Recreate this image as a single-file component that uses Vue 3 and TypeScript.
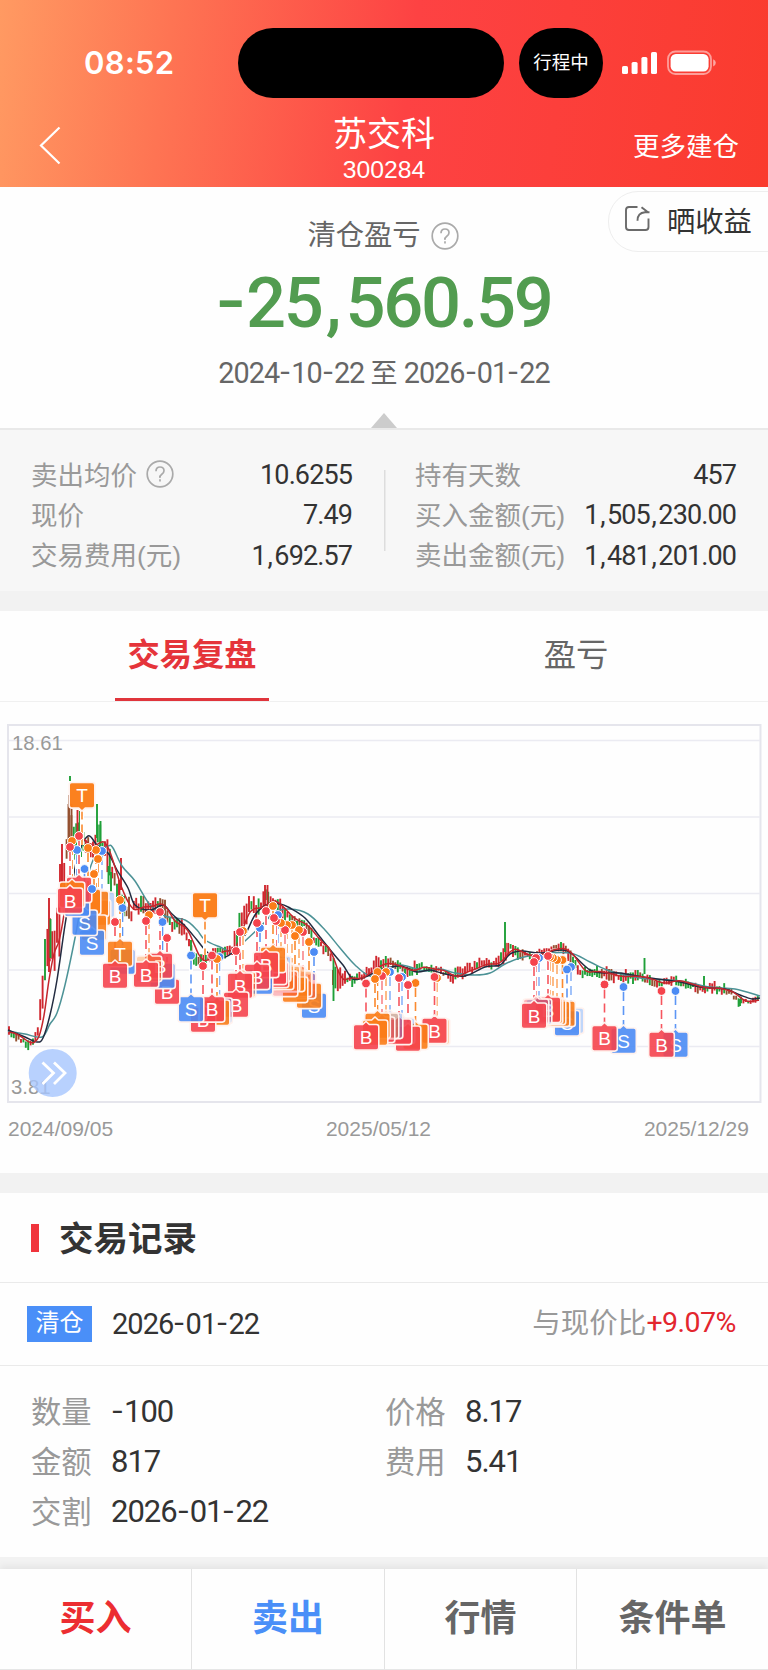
<script setup lang="ts">
import { defineComponent, h } from 'vue'

type Kind = 'B' | 'S' | 'T'
interface Marker { x: number; y: number; k: Kind; ghost?: boolean; up?: boolean; bare?: boolean }
interface Candle { x: number; top: number; bottom: number; color: string }
type Point = [number, number]

// Figures with widened hyphens and commas
const Num = defineComponent({
  props: { v: { type: String, required: true } },
  setup(props) {
    return () =>
      h('span', { class: 'num' }, props.v.split(/([-,])/).filter(Boolean).map((part) =>
        part === '-' ? h('span', { class: 'num-dash' }, part) : part === ',' ? h('span', { class: 'num-comma' }, part) : part,
      ))
  },
})

const stats = [
  [
    { label: '卖出均价', value: '10.6255', help: true },
    { label: '现价', value: '7.49', help: false },
    { label: '交易费用(元)', value: '1,692.57', help: false },
  ],
  [
    { label: '持有天数', value: '457', help: false },
    { label: '买入金额(元)', value: '1,505,230.00', help: false },
    { label: '卖出金额(元)', value: '1,481,201.00', help: false },
  ],
]

const details = [
  { label: '数量', value: '-100' },
  { label: '价格', value: '8.17' },
  { label: '金额', value: '817' },
  { label: '费用', value: '5.41' },
  { label: '交割', value: '2026-01-22' },
]

const gridLines = [740.5, 817, 893.5, 970, 1046.5]

// x, y, half range of the price at that point
const trend: [number, number, number][] = [
  [9, 1032, 4], [20, 1039, 5], [28, 1045, 5], [34, 1040, 5], [38, 1030, 7], [42, 1002, 16], [46, 955, 38],
  [50, 944, 32], [54, 950, 26], [58, 935, 36], [62, 885, 24], [66, 860, 24], [69, 835, 30], [72, 832, 27],
  [76, 836, 24], [80, 840, 20], [86, 846, 14], [92, 850, 12], [97, 835, 25], [102, 845, 16], [107, 853, 16],
  [112, 876, 12], [118, 890, 14], [124, 905, 10], [131, 913, 11], [138, 905, 9], [146, 908, 8], [153, 904, 10],
  [160, 902, 10], [167, 918, 9], [173, 925, 7], [181, 925, 9], [188, 940, 8], [196, 962, 7], [205, 960, 6],
  [214, 953, 7], [224, 950, 6], [232, 952, 5], [236, 936, 14], [242, 915, 10], [249, 907, 11], [257, 909, 9],
  [262, 906, 6], [266, 900, 14], [271, 900, 8], [277, 905, 7], [285, 914, 7], [293, 921, 5], [303, 924, 7],
  [312, 936, 7], [320, 945, 5], [329, 952, 5], [334, 978, 18], [338, 984, 13], [344, 976, 7], [354, 980, 5],
  [366, 973, 5], [378, 964, 8], [388, 963, 7], [398, 967, 6], [410, 972, 6], [418, 966, 7], [428, 969, 4],
  [440, 970, 4], [452, 978, 6], [462, 972, 6], [474, 968, 6], [484, 963, 5], [495, 965, 4], [501, 957, 9],
  [505, 950, 9], [512, 948, 6], [520, 954, 6], [530, 956, 4], [542, 953, 5], [553, 948, 4], [563, 949, 6],
  [572, 958, 7], [580, 973, 4], [592, 971, 5], [604, 973, 7], [618, 977, 6], [632, 976, 7], [645, 978, 6],
  [660, 984, 4], [674, 980, 5], [688, 984, 5], [700, 988, 6], [715, 988, 5], [730, 992, 5], [740, 1002, 5],
  [750, 1001, 3], [760, 999, 3],
]

function sample(x: number): [number, number] {
  for (let i = 1; i < trend.length; i++) {
    const a = trend[i - 1]
    const b = trend[i]
    if (x <= b[0]) {
      const t = (x - a[0]) / (b[0] - a[0])
      return [a[1] + (b[1] - a[1]) * t, a[2] + (b[2] - a[2]) * t]
    }
  }
  const last = trend[trend.length - 1]
  return [last[1], last[2]]
}

let seed = 41
function rand(): number {
  seed = (seed * 1103515245 + 12345) % 2147483648
  return seed / 2147483648
}

const RED = '#d0272e'
const GREEN = '#1fa038'
const BROWN = '#94502f'
const candles: Candle[] = []
for (let x = 9; x < 760; x += 2.4) {
  const [mid, half] = sample(x)
  const slope = sample(x + 4)[0] - sample(x - 4)[0]
  const c = mid + (rand() - 0.5) * half * 0.9
  const size = half * (0.35 + rand() * 0.7)
  const r = rand() + (slope > 2 ? 0.18 : slope < -2 ? -0.3 : 0)
  const color = x > 66 && x < 82 && r < 0.6 ? BROWN : r < 0.52 ? RED : r < 0.93 ? GREEN : BROWN
  candles.push({ x, top: c - size, bottom: c + size, color })
}
candles.push(
  { x: 70, top: 776, bottom: 781, color: GREEN },
  { x: 68.5, top: 804, bottom: 850, color: BROWN },
  { x: 71.5, top: 804, bottom: 850, color: BROWN },
  { x: 77.5, top: 810, bottom: 840, color: RED },
  { x: 80, top: 811, bottom: 845, color: GREEN },
  { x: 97, top: 804, bottom: 838, color: GREEN },
  { x: 100.5, top: 821, bottom: 848, color: GREEN },
  { x: 62, top: 844, bottom: 884, color: RED },
  { x: 60, top: 864, bottom: 900, color: RED },
  { x: 49, top: 898, bottom: 972, color: RED },
  { x: 50.5, top: 919, bottom: 958, color: GREEN },
  { x: 108.5, top: 866, bottom: 884, color: GREEN },
  { x: 111, top: 872, bottom: 892, color: GREEN },
  { x: 121, top: 858, bottom: 890, color: RED },
  { x: 119, top: 880, bottom: 906, color: RED },
  { x: 191, top: 940, bottom: 957, color: GREEN },
  { x: 265, top: 885, bottom: 912, color: RED },
  { x: 267.5, top: 885, bottom: 910, color: RED },
  { x: 333.5, top: 958, bottom: 1001, color: GREEN },
  { x: 505, top: 922, bottom: 952, color: GREEN },
  { x: 644.5, top: 958, bottom: 974, color: GREEN },
  { x: 704, top: 976, bottom: 990, color: GREEN },
  { x: 740, top: 999, bottom: 1006, color: GREEN },
)

function smooth(points: Point[]): string {
  let d = `M${points[0][0]} ${points[0][1]}`
  for (let i = 0; i < points.length - 1; i++) {
    const p0 = points[i - 1] ?? points[i]
    const p1 = points[i]
    const p2 = points[i + 1]
    const p3 = points[i + 2] ?? p2
    d += `C${p1[0] + (p2[0] - p0[0]) / 6} ${p1[1] + (p2[1] - p0[1]) / 6} ${p2[0] - (p3[0] - p1[0]) / 6} ${p2[1] - (p3[1] - p1[1]) / 6} ${p2[0]} ${p2[1]}`
  }
  return d
}

const shortAverage: Point[] = []
for (let x = 9; x <= 760; x += 5) {
  let sum = 0
  for (let k = 0; k < 5; k++) sum += sample(Math.max(9, x - k * 2.4))[0]
  shortAverage.push([x, sum / 5])
}
const averages = [
  {
    color: '#4c9296',
    d: smooth([[8, 1031], [25, 1034], [42, 1037], [50, 1024], [57, 1013], [65, 985], [75, 938], [84, 890], [95, 856], [108, 846], [113, 848], [122, 866], [135, 881], [150, 905], [165, 916], [185, 920], [197, 930], [205, 940], [220, 947], [232, 951], [245, 941], [262, 925], [275, 912], [290, 909], [308, 914], [325, 930], [340, 948], [355, 965], [370, 976], [385, 972], [400, 965], [425, 971], [440, 969], [455, 973], [475, 975], [490, 973], [505, 964], [520, 958], [540, 954], [570, 953], [590, 962], [610, 971], [640, 978], [680, 981], [710, 987], [735, 989], [760, 996]]),
  },
  {
    color: '#222b40',
    d: smooth([[8, 1030], [25, 1037], [37, 1042], [43, 1038], [50, 1015], [57, 980], [65, 925], [72, 885], [78, 855], [88, 836], [97, 845], [108, 853], [117, 870], [128, 888], [135, 905], [150, 910], [163, 905], [172, 914], [185, 926], [197, 940], [207, 952], [218, 958], [232, 953], [245, 935], [255, 915], [266, 905], [280, 904], [290, 908], [305, 918], [320, 937], [332, 952], [343, 965], [353, 979], [365, 977], [380, 970], [400, 966], [417, 972], [430, 970], [445, 974], [465, 976], [485, 967], [500, 965], [510, 954], [522, 951], [540, 953], [562, 950], [572, 954], [590, 970], [605, 973], [620, 973], [650, 978], [680, 982], [700, 987], [725, 989], [740, 995], [752, 999], [760, 998]]),
  },
  { color: '#c4262c', d: smooth(shortAverage) },
]

const fills: Record<Kind, string> = { B: '#f5434c', S: '#4b8bf4', T: '#fb7d18' }

// Painted from the last entry to the first, so earlier trades lie on top
const markers: Marker[] = [
  { x: 70, y: 847, k: 'B' }, { x: 72, y: 841, k: 'T', bare: true }, { x: 79, y: 836, k: 'B', bare: true }, { x: 77, y: 850, k: 'S', bare: true },
  { x: 84.5, y: 869, k: 'S' }, { x: 92, y: 889, k: 'S' }, { x: 88, y: 848, k: 'T', bare: true },
  { x: 94, y: 874, k: 'T', bare: true }, { x: 96, y: 850, k: 'T', bare: true }, { x: 98, y: 859, k: 'T', bare: true }, { x: 102, y: 851, k: 'S', ghost: true },
  { x: 115, y: 922, k: 'B' }, { x: 120, y: 900, k: 'T' }, { x: 122.5, y: 908, k: 'S', bare: true },
  { x: 146, y: 921, k: 'B' }, { x: 149, y: 915, k: 'T', ghost: true },
  { x: 160, y: 912, k: 'B' }, { x: 162.5, y: 922, k: 'S', bare: true }, { x: 167, y: 938, k: 'B' },
  { x: 191, y: 955.5, k: 'S' }, { x: 212, y: 955.5, k: 'B' }, { x: 203, y: 966, k: 'B' },
  { x: 217, y: 959, k: 'T', bare: true }, { x: 219.5, y: 957, k: 'S', ghost: true },
  { x: 236, y: 951, k: 'B' }, { x: 240, y: 932, k: 'B' }, { x: 243, y: 931, k: 'T', ghost: true },
  { x: 257, y: 923, k: 'B' }, { x: 266, y: 911, k: 'B' }, { x: 260, y: 928, k: 'S', bare: true },
  { x: 273, y: 906, k: 'T', bare: true }, { x: 274, y: 918, k: 'B', bare: true }, { x: 276, y: 921, k: 'B', bare: true }, { x: 278, y: 915, k: 'S', ghost: true },
  { x: 281, y: 923, k: 'T', ghost: true }, { x: 285, y: 930, k: 'B', ghost: true }, { x: 287, y: 925, k: 'T', ghost: true },
  { x: 292, y: 925, k: 'T', ghost: true }, { x: 295, y: 936, k: 'T', bare: true }, { x: 299, y: 930, k: 'T', ghost: true },
  { x: 303, y: 932, k: 'B', ghost: true }, { x: 309, y: 942, k: 'T', bare: true }, { x: 314, y: 952, k: 'S' },
  { x: 366, y: 983.5, k: 'B' }, { x: 375, y: 979, k: 'T', bare: true }, { x: 377.5, y: 972, k: 'T', bare: true }, { x: 382, y: 976, k: 'B', ghost: true },
  { x: 386, y: 972, k: 'T', ghost: true }, { x: 390, y: 972, k: 'S', ghost: true }, { x: 399, y: 978, k: 'B', bare: true }, { x: 408, y: 985, k: 'B', bare: true },
  { x: 402, y: 977, k: 'S', ghost: true }, { x: 415.5, y: 983, k: 'T', bare: true },
  { x: 434.5, y: 977, k: 'B' }, { x: 437, y: 978, k: 'T', ghost: true },
  { x: 534, y: 962, k: 'B' }, { x: 536, y: 958, k: 'B', ghost: true }, { x: 539, y: 958, k: 'S', ghost: true },
  { x: 548, y: 956, k: 'B' }, { x: 550, y: 957, k: 'T', ghost: true }, { x: 553, y: 958, k: 'T', ghost: true },
  { x: 557, y: 960, k: 'T', ghost: true }, { x: 562.5, y: 960, k: 'T', bare: true }, { x: 567, y: 969.5, k: 'S' }, { x: 571, y: 967, k: 'S', ghost: true },
  { x: 604.5, y: 984.5, k: 'B' }, { x: 623.5, y: 987, k: 'S' }, { x: 661.5, y: 991, k: 'B' }, { x: 675.5, y: 991, k: 'S' },
  { x: 82, y: 849, k: 'T', up: true }, { x: 205, y: 959, k: 'T', up: true },
]
const painted = markers.slice().reverse()

function boxTop(m: Marker): number {
  return m.up ? m.y - 66.5 : m.y + 41
}
function boxPath(m: Marker): string {
  const t = boxTop(m)
  const l = m.x - 12.8
  if (m.up) return `M${l + 2.5} ${t}h20.600q2.500 0 2.500 2.500v20.600q0 2.500 -2.500 2.500h-7l-3.300 3l-3.300 -3h-7q-2.500 0 -2.500 -2.500v-20.600q0 -2.500 2.500 -2.500z`
  return `M${l + 2.5} ${t}h7l3.300 -3l3.300 3h7q2.500 0 2.500 2.500v20.600q0 2.500 -2.500 2.500h-20.600q-2.500 0 -2.500 -2.500v-20.600q0 -2.500 2.500 -2.500z`
}
</script>

<template>
  <div class="screen">
    <header class="head">
      <div class="status">
        <span class="clock">08:52</span>
        <span class="island"></span>
        <span class="trip">行程中</span>
        <svg class="signal" width="36" height="24" viewBox="0 0 36 24" fill="#fff">
          <rect x="0" y="15" width="6" height="8" rx="1.6" />
          <rect x="9.6" y="11" width="6" height="12" rx="1.6" />
          <rect x="19.4" y="6" width="6" height="17" rx="1.6" />
          <rect x="29" y="1" width="6" height="22" rx="1.6" />
        </svg>
        <svg class="battery" width="50" height="26" viewBox="0 0 50 26">
          <rect x="1" y="1.5" width="43" height="22.5" rx="7.5" fill="none" stroke="#fff" stroke-opacity=".5" stroke-width="1.8" />
          <rect x="3.6" y="4" width="38" height="17.5" rx="5.2" fill="#fff" />
          <path d="M46.2 9.2q2.6 1 2.6 3.6t-2.6 3.6z" fill="#fff" fill-opacity=".55" />
        </svg>
      </div>
      <div class="nav">
        <svg class="back" width="24" height="42" viewBox="0 0 24 42"><path d="M21.500 2.500 3 20.500l18.500 18" fill="none" stroke="#fff" stroke-width="2.2" /></svg>
        <div class="stock">
          <div class="name">苏交科</div>
          <div class="code">300284</div>
        </div>
        <span class="more">更多建仓</span>
      </div>
    </header>

    <section class="summary">
      <div class="caption">
        <span>清仓盈亏</span>
        <svg class="help" width="28" height="28" viewBox="0 0 28 28" fill="none" stroke="#aaa" stroke-width="1.7">
          <circle cx="14" cy="14" r="12.800" />
          <path d="M10 11.200q0-4.200 4-4.200t4 3.800q0 2-2.200 3.500t-1.800 3.500" /><path d="M14 19.300v2.200" />
        </svg>
      </div>
      <div class="total"><Num v="-25,560.59" /></div>
      <div class="range"><Num v="2024-10-22" /> <b>至</b> <Num v="2026-01-22" /></div>
      <div class="share">
        <svg width="28" height="28" viewBox="0 0 28 28" fill="none" stroke="#6a6a6a" stroke-width="1.900">
          <path d="M13.500 2H5Q2 2 2 5v17q0 3 3 3h16.500q3 0 3-3v-8.500" />
          <path d="M17.500 2.200 24 7.300M25.500 7.300H21q-7.500 .5-7.500 8.500" />
        </svg>
        <span>晒收益</span>
      </div>
      <i class="fold"></i>
    </section>

    <section class="stats">
      <div v-for="(column, c) in stats" :key="c" class="column">
        <div v-for="row in column" :key="row.label" class="stat">
          <span class="label">{{ row.label }}</span>
          <svg v-if="row.help" class="help" width="28" height="28" viewBox="0 0 28 28" fill="none" stroke="#aaa" stroke-width="1.7">
            <circle cx="14" cy="14" r="12.800" />
            <path d="M10 11.200q0-4.200 4-4.200t4 3.800q0 2-2.200 3.500t-1.800 3.500" /><path d="M14 19.300v2.200" />
          </svg>
          <Num class="value" :v="row.value" />
        </div>
      </div>
    </section>
    <div class="gap"></div>

    <nav class="tabs">
      <span class="tab"><span class="active">交易复盘</span></span>
      <span class="tab"><span>盈亏</span></span>
    </nav>

    <section class="chart">
      <svg width="768" height="389" viewBox="0 718 768 389">
        <rect x="8" y="725" width="752.500" height="377" fill="none" stroke="#e5e5ec" stroke-width="2" />
        <line v-for="y in gridLines" :key="y" x1="9" x2="760" :y1="y" :y2="y" stroke="#ebebf2" stroke-width="1.500" />
        <text x="12" y="749.500" class="scale">18.61</text>
        <text x="11" y="1094" class="scale">3.81</text>
        <line v-for="(c, i) in candles" :key="'c' + i" :x1="c.x" :x2="c.x" :y1="c.top" :y2="c.bottom" :stroke="c.color" stroke-width="1.900" />
        <path v-for="a in averages" :key="a.color" :d="a.d" fill="none" :stroke="a.color" stroke-width="1.500" />
        <g v-for="(m, i) in painted" :key="'l' + i">
          <line :x1="m.x" :x2="m.x" :y1="m.up ? boxTop(m) + 28 : m.y + 5" :y2="m.up ? m.y - 4 : boxTop(m) - 3" stroke="#fff" stroke-width="4" />
          <line :x1="m.x" :x2="m.x" :y1="m.up ? boxTop(m) + 28 : m.y + 5" :y2="m.up ? m.y - 4 : boxTop(m) - 3" :stroke="fills[m.k]" :stroke-opacity="m.ghost ? 0.65 : 0.9" stroke-width="1.600" stroke-dasharray="9 5" />
        </g>
        <g v-for="(m, i) in painted" :key="'b' + i">
          <path :d="boxPath(m)" :fill="fills[m.k]" :fill-opacity="m.ghost ? 0.35 : m.up ? 0.97 : 0.9" stroke="#fff2ee" stroke-width="1.600" />
          <text v-if="!m.ghost && !m.bare" :x="m.x" :y="boxTop(m) + 19.5" class="letter">{{ m.k }}</text>
        </g>
        <template v-for="(m, i) in painted" :key="'d' + i">
          <circle v-if="!m.up" :cx="m.x" :cy="m.y" r="4.400" :fill="fills[m.k]" stroke="#fff" stroke-width="1" />
        </template>
        <circle cx="52.700" cy="1073" r="24" fill="#a6c6fe" fill-opacity=".8" />
        <path d="M42.500 1062.500 53.500 1073l-11 11M54 1062.500 65 1073l-11 11" fill="none" stroke="#fff" stroke-width="2.800" />
      </svg>
      <div class="dates"><span>2024/09/05</span><span>2025/05/12</span><span>2025/12/29</span></div>
    </section>
    <div class="gap"></div>

    <section class="records">
      <h2>交易记录</h2>
      <div class="record">
        <span class="tag">清仓</span>
        <Num class="day" v="2026-01-22" />
        <span class="versus"><span>与现价比</span><em>+9.07%</em></span>
      </div>
      <div class="details">
        <div v-for="d in details" :key="d.label" class="detail"><span class="label">{{ d.label }}</span><Num class="value" :v="d.value" /></div>
      </div>
    </section>

    <footer class="actions">
      <span class="buy">买入</span><span class="sell">卖出</span><span>行情</span><span>条件单</span>
    </footer>
  </div>
</template>

<style>
body { margin: 0; background: #f2f2f2; }
.num { letter-spacing: -0.033em; white-space: nowrap; }
.num-dash { display: inline-block; width: 0.42em; text-align: center; letter-spacing: 0; transform: translateY(-0.03em) scaleX(1.2); }
.num-comma { margin-right: 0.09em; margin-left: 0.06em; }
</style>

<style scoped>
.screen {
  width: 768px; height: 1670px; overflow: hidden; display: flex; flex-direction: column;
  background: #f2f2f2; color: #333; font-family: "Liberation Sans", "Noto Sans CJK SC", sans-serif;
}
.screen * { box-sizing: border-box; }
.head { height: 187px; flex: none; color: #fff; background: linear-gradient(97deg, #ff9a62 0%, #fe7453 22%, #fd4243 53%, #fc3f3b 72%, #fa3b2e 100%); }
.status { height: 98px; padding-top: 27px; display: flex; align-items: center; }
.clock { width: 154px; margin-left: 84px; font: 600 31px/40px Inter, sans-serif; letter-spacing: 0.3px; }
.island { width: 266px; height: 70px; border-radius: 35px; background: #000; }
.trip { width: 84px; height: 70px; margin-left: 15px; border-radius: 40px; background: #000; font-size: 18.500px; line-height: 70px; text-align: center; }
.signal { margin-left: 19px; }
.battery { margin-left: 9px; }
.nav { height: 89px; display: grid; grid-template-columns: 200px 1fr 200px; }
.back { margin: 27px 0 0 38px; }
.stock { text-align: center; }
.name { margin-top: 12px; font-size: 34px; line-height: 48px; }
.code { margin-top: -3px; font-size: 24.700px; line-height: 30px; }
.more { justify-self: end; margin: 31px 29px 0 0; font-size: 26.500px; line-height: 36px; }
.summary { height: 243px; flex: none; position: relative; background: #fefefe; border-bottom: 2px solid #e9e9e9; text-align: center; }
.caption { display: flex; justify-content: center; align-items: center; gap: 10px; padding: 27px 2px 0 0; font-size: 28.300px; line-height: 42px; color: #666; }
.help { flex: none; }
.caption .help { position: relative; top: 1px; }
.total { margin-top: 5px; color: #529c50; font: 500 70.500px/84px Roboto, sans-serif; }
.range { margin-top: 8px; color: #666; font: 400 28.800px/40px Roboto, "Noto Sans CJK SC", sans-serif; }
.range b { font-weight: 400; font-size: 27px; margin: 0 -1px; }
.share { position: absolute; top: 4px; right: -1px; width: 161px; height: 61px; padding-left: 15px; display: flex; align-items: center; border: 1.500px solid #eee; border-radius: 30px 0 0 30px; font-size: 28.300px; line-height: 40px; }
.share span { margin: 1px 0 0 15px; }
.share svg { margin-top: -5px; }
.fold { position: absolute; left: 371px; bottom: 0; border: solid transparent; border-width: 0 13px 15px; border-bottom-color: #ccc; }
.stats { height: 161px; flex: none; display: grid; grid-template-columns: 384px 384px; padding-top: 24px; background: #f7f7f7; }
.column { height: 122px; padding: 0 32px 0 31px; position: relative; }
.column + .column { padding: 0 32px 0 31px; background: linear-gradient(#ddd, #ddd) 0 16px / 1.500px 81px no-repeat; }
.stat { height: 40.300px; display: flex; align-items: center; font-size: 26.500px; }
.stat .label { color: #999; white-space: nowrap; position: relative; top: -1px; }
.stat .help { margin-left: 9px; }
.stat .value { margin-left: auto; font-family: Roboto, sans-serif; font-size: 27px; position: relative; top: 1px; }
.gap { height: 20px; flex: none; background: #f2f2f2; }
.tabs { height: 91px; flex: none; display: grid; grid-template-columns: 1fr 1fr; background: #fefefe; border-bottom: 1px solid #f0f0f0; font-size: 32.300px; color: #666; }
.tab { display: flex; justify-content: center; }
.tab span { height: 90px; line-height: 89px; padding: 0 12px; border-bottom: 3px solid transparent; }
.tab .active { color: #e5343a; font-weight: 700; border-color: #e0353c; }
.chart { height: 471px; flex: none; padding-top: 16px; background: #fefefe; }
.chart svg { display: block; }
.scale { font-size: 20.300px; fill: #999; }
.letter { font-size: 19px; fill: #fff; text-anchor: middle; }
.dates { display: flex; justify-content: space-between; padding: 9px 19px 0 8px; font-size: 21px; line-height: 26px; color: #999; }
.records { height: 364px; flex: none; background: #fefefe; }
h2 { height: 90px; margin: 0; display: flex; align-items: center; border-bottom: 1.500px solid #eaeaea; font-size: 34.500px; line-height: 90px; padding-top: 2px; }
h2::before { content: ""; width: 8px; height: 28px; margin: -2px 20px 0 31px; background: #f0343c; }
.record { height: 83px; display: flex; align-items: center; padding: 0 32px 0 27px; border-bottom: 1.500px solid #eaeaea; }
.tag { width: 65px; height: 36px; background: #4a8ff8; color: #fff; font-size: 24px; line-height: 34px; text-align: center; }
.day { margin: -1px 0 0 20px; font: 400 29px/40px Roboto, sans-serif; }
.versus { margin: -2px 0 0 auto; display: flex; align-items: center; font-size: 28.500px; line-height: 40px; color: #999; }
em { font: 400 28.500px/40px Roboto, sans-serif; letter-spacing: -0.5px; color: #e3262e; }
.details { display: grid; grid-template-columns: 354px 1fr; padding: 20px 0 0 31px; }
.detail { height: 50.200px; display: flex; align-items: center; font-size: 30.300px; }
.detail .label { width: 80px; color: #999; position: relative; top: -1.500px; }
.detail .value { font: 400 31px/44px Roboto, sans-serif; position: relative; top: 0.500px; }
.actions { height: 101px; margin-top: 12px; flex: none; display: grid; grid-template-columns: 192px 193px 192px 191px; background: #fefefe; box-shadow: 0 -3px 7px rgba(0, 0, 0, .06); border-bottom: 1.500px solid #e6e6e6; }
.actions span { text-align: center; font-size: 36px; font-weight: 700; line-height: 99px; color: #666; border-right: 1.500px solid #e2e2e2; }
.actions span:last-child { border-right: 0; }
.actions .buy { color: #ec2d31; }
.actions .sell { color: #4a8ff8; }
</style>
